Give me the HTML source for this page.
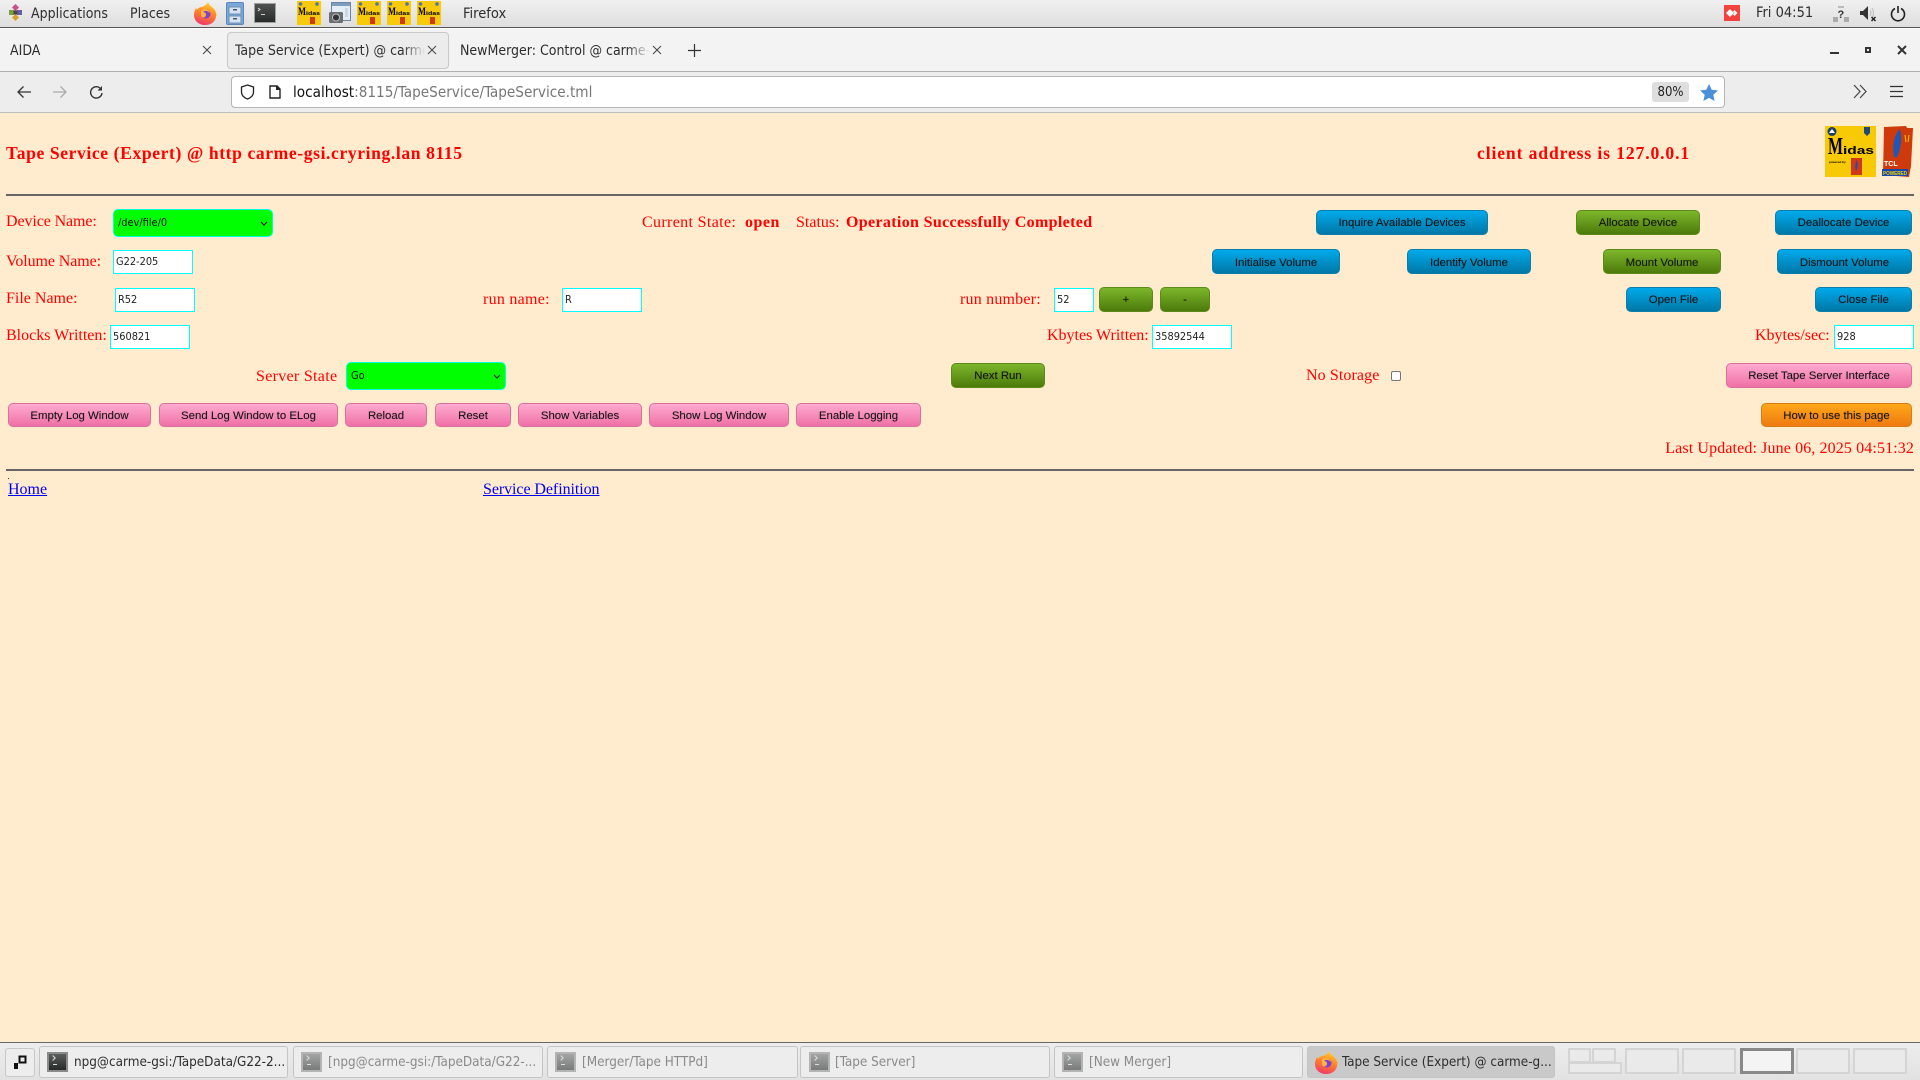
<!DOCTYPE html>
<html><head><meta charset="utf-8"><title>Tape Service (Expert)</title>
<style>
html,body{margin:0;padding:0;width:1920px;height:1080px;overflow:hidden;background:#ffebcd}
*{box-sizing:border-box}
.a{position:absolute;white-space:nowrap}
#top{position:absolute;left:0;top:0;width:1920px;height:28px;background:linear-gradient(#f0f0f0,#dedede);border-bottom:1px solid #555}
#tabs{position:absolute;left:0;top:28px;width:1920px;height:44px;background:#f3f3f3;border-bottom:1px solid #b0b0b0;border-top:1px solid #fff}
#nav{position:absolute;left:0;top:72px;width:1920px;height:41px;background:#ededed;border-bottom:1px solid #bdbdbd}
#task{position:absolute;left:0;top:1042px;width:1920px;height:38px;background:linear-gradient(#ededed,#e2e2e2);border-top:1px solid #666}
.ui{font-family:"DejaVu Sans Condensed","DejaVu Sans",sans-serif;font-stretch:condensed;font-size:14px;line-height:20px;height:20px;color:#2e2e2e}
.s{font-family:"Liberation Serif",serif;font-size:16px;line-height:20px;height:20px;color:#f00}
.b{font-weight:bold}
.t{font-size:17.6px;font-weight:bold}
hr{position:absolute;margin:0;border:0;height:2px;background:#666;left:6px;width:1908px}
button{position:absolute;padding:0;font-family:"Liberation Sans",sans-serif;font-size:11.4px;color:#111;border-radius:5px;text-shadow:0 0 1px rgba(0,0,0,.25)}
.p1{padding-top:2px}
.bl{background:linear-gradient(#00aaeb,#0077a6);border:1px solid #0a7fae}
.gr{background:linear-gradient(#7cb72b,#4d7a0b);border:1px solid #5c8a18}
.pk{background:linear-gradient(#ffabcf,#ef70a6);border:1px solid #d9719f}
.or{background:linear-gradient(#ffa819,#ee7a12);border:1px solid #d87c14}
input[type=text]{position:absolute;width:80px;height:24px;padding:0 2px 2px;margin:0;border:1.5px solid #0ff;border-radius:0;background:#fff;font-family:"DejaVu Sans Condensed","DejaVu Sans",sans-serif;font-stretch:condensed;font-size:10.9px;color:#222;outline:0}
.sel{position:absolute;width:160px;height:28px;background:#0f0;border:1px solid #0fd;border-radius:5px;font-family:"DejaVu Sans Condensed","DejaVu Sans",sans-serif;font-stretch:condensed;font-size:10.9px;color:#111;line-height:26px;padding-left:4px}
.sel svg{position:absolute;right:4px;top:11px}
a{color:#00e;text-decoration:underline}
.tk{position:absolute;top:1046px;height:32px;border:1px solid #c4c4c4;border-radius:3px;background:#ededed;font-family:"DejaVu Sans Condensed","DejaVu Sans",sans-serif;font-stretch:condensed;font-size:13.4px;line-height:31px;color:#8a8a8a;padding-left:34px;white-space:nowrap;overflow:hidden}
.pg{position:absolute;top:1048px;height:26px;width:54px;border:2px solid #d4d4d4;background:#eaeaea}
.term{position:absolute;top:1052px;width:21px;height:20px;background:linear-gradient(#a2a5a3,#787b79);border:2px solid #b4b4b4}
.term:after{content:"";position:absolute;left:4px;top:10px;width:4px;height:1px;background:#ddd}
.term:before{content:"";position:absolute;left:2px;top:2px;width:3px;height:3px;border-top:1px solid #ddd;border-right:1px solid #ddd;transform:rotate(45deg)}
.mi{position:absolute;top:1px;width:24px;height:24px}
.bx{position:absolute;border:2px solid #d4d4d4;background:#eaeaea}
</style></head><body>

<div id="top"></div>
<div id="tabs"></div>
<div id="nav"></div>

<!-- panel -->
<svg class="a" style="left:8px;top:4px" width="15" height="18" viewBox="0 0 15 18"><rect x="5" y="1" width="5" height="5" fill="#c84f8c" transform="rotate(45 7.5 3.5)"/><rect x="1" y="6" width="5" height="5" fill="#7a9e3a"/><rect x="9" y="6" width="5" height="5" fill="#6a5ba8"/><rect x="5" y="11" width="5" height="5" fill="#d9a02e" transform="rotate(45 7.5 13.5)"/><rect x="5.500" y="6.500" width="4" height="4" fill="#444"/></svg>
<div class="a ui" style="left:31px;top:4px">Applications</div>
<div class="a ui" style="left:130px;top:4px">Places</div>
<svg class="a" style="left:193px;top:1px" width="24" height="25" viewBox="0 0 24 25"><defs><linearGradient id="ff" x1=".7" y1="0" x2=".4" y2="1"><stop offset="0" stop-color="#ffd52e"/><stop offset=".45" stop-color="#ff8a24"/><stop offset="1" stop-color="#f0396a"/></linearGradient></defs><path d="M15 1c1 3 3 4 5 6 3 3 4 6 3 9-1 5-5 8-11 8S1 20 1 14c0-3 1-5 2-7l1 2c1-2 3-3 5-3 2-1 5-2 6-5z" fill="url(#ff)"/><circle cx="13" cy="13" r="4.500" fill="#7a44d0"/><path d="M8 10c2-3 8-2 9 2-2-2-5-3-7-1 3 0 4 3 2 5-2 1-4 0-4-2 0-1 0-3 0-4z" fill="#ffb347"/></svg>
<svg class="a" style="left:226px;top:2px" width="18" height="23" viewBox="0 0 18 23"><rect x=".5" y=".5" width="17" height="22" rx="1.500" fill="#7aa8da" stroke="#5a86b8"/><rect x="3" y="5" width="12" height="7" fill="#d5e3f2" stroke="#6d8db3"/><rect x="3" y="14" width="12" height="7" fill="#d5e3f2" stroke="#6d8db3"/><rect x="7" y="7" width="4" height="1.500" fill="#456"/><rect x="7" y="16" width="4" height="1.500" fill="#456"/></svg>
<svg class="a" style="left:254px;top:3px" width="22" height="20" viewBox="0 0 22 20"><defs><linearGradient id="tg" x1="0" y1="0" x2="0" y2="1"><stop offset="0" stop-color="#4f5452"/><stop offset="1" stop-color="#262a28"/></linearGradient></defs><rect x=".5" y=".5" width="21" height="19" fill="url(#tg)" stroke="#a0a0a0"/><path d="M4 5l2 1.500L4 8" stroke="#ddd" fill="none"/><rect x="7" y="11" width="4" height="1" fill="#ccc"/></svg>

<svg class="mi" style="left:297px" viewBox="0 0 24 24"><rect width="24" height="24" fill="#f8ca0c"/><circle cx="3.500" cy="3" r="1.800" fill="#56749a"/><circle cx="20" cy="3" r="1.800" fill="#56749a"/><text x="1" y="14" font-family="Liberation Serif" font-weight="bold" font-size="12" textLength="8" lengthAdjust="spacingAndGlyphs">M</text><text x="9" y="14" font-family="Liberation Sans" font-weight="bold" font-size="5.500" textLength="14" lengthAdjust="spacingAndGlyphs">idas</text><rect x="13" y="16" width="5" height="7" fill="#d0381a"/></svg>
<svg class="a" style="left:329px;top:2px" width="22" height="23" viewBox="0 0 22 23"><rect x="2.500" y=".5" width="19" height="18" fill="#e4ecf4" stroke="#6a85a5"/><rect x="3" y="1" width="18" height="3" fill="#7f9dbd"/><rect x="16" y="6" width="3" height="9" fill="#c8d8e8"/><rect x="0" y="10" width="14" height="11" rx="1.500" fill="#6a6e71"/><circle cx="7" cy="15.500" r="3.500" fill="#333" stroke="#bbb"/></svg>
<svg class="mi" style="left:357px" viewBox="0 0 24 24"><rect width="24" height="24" fill="#f8ca0c"/><circle cx="3.500" cy="3" r="1.800" fill="#56749a"/><circle cx="20" cy="3" r="1.800" fill="#56749a"/><text x="1" y="14" font-family="Liberation Serif" font-weight="bold" font-size="12" textLength="8" lengthAdjust="spacingAndGlyphs">M</text><text x="9" y="14" font-family="Liberation Sans" font-weight="bold" font-size="5.500" textLength="14" lengthAdjust="spacingAndGlyphs">idas</text><rect x="13" y="16" width="5" height="7" fill="#d0381a"/></svg>
<svg class="mi" style="left:387px" viewBox="0 0 24 24"><rect width="24" height="24" fill="#f8ca0c"/><circle cx="3.500" cy="3" r="1.800" fill="#56749a"/><circle cx="20" cy="3" r="1.800" fill="#56749a"/><text x="1" y="14" font-family="Liberation Serif" font-weight="bold" font-size="12" textLength="8" lengthAdjust="spacingAndGlyphs">M</text><text x="9" y="14" font-family="Liberation Sans" font-weight="bold" font-size="5.500" textLength="14" lengthAdjust="spacingAndGlyphs">idas</text><rect x="13" y="16" width="5" height="7" fill="#d0381a"/></svg>
<svg class="mi" style="left:417px" viewBox="0 0 24 24"><rect width="24" height="24" fill="#f8ca0c"/><circle cx="3.500" cy="3" r="1.800" fill="#56749a"/><circle cx="20" cy="3" r="1.800" fill="#56749a"/><text x="1" y="14" font-family="Liberation Serif" font-weight="bold" font-size="12" textLength="8" lengthAdjust="spacingAndGlyphs">M</text><text x="9" y="14" font-family="Liberation Sans" font-weight="bold" font-size="5.500" textLength="14" lengthAdjust="spacingAndGlyphs">idas</text><rect x="13" y="16" width="5" height="7" fill="#d0381a"/></svg>
<div class="a ui" style="left:463px;top:4px;font-size:14.600px">Firefox</div>

<svg class="a" style="left:1724px;top:5px" width="16" height="16" viewBox="0 0 16 16"><rect width="16" height="16" fill="#f4433c"/><path d="M6 4l4 4-4 4-4-4z M10.500 5l3 3-3 3-1.500-1.500L10.500 8 9 6.500z" fill="#fff"/></svg>
<div class="a ui" style="left:1756px;top:3px;font-size:14.500px">Fri 04:51</div>
<svg class="a" style="left:1833px;top:5px" width="16" height="17" viewBox="0 0 16 17"><rect x="0" y="12" width="5" height="5" fill="#aaa"/><rect x="11" y="12" width="5" height="5" fill="#aaa"/><rect x="5" y="1" width="6" height="2" fill="#bbb"/><text x="4.500" y="13" font-family="Liberation Sans" font-weight="bold" font-size="11" fill="#333">?</text></svg>
<svg class="a" style="left:1860px;top:5px" width="17" height="17" viewBox="0 0 17 17"><path d="M0 6h3l5-5v14l-5-5H0z" fill="#333"/><path d="M10 5q2 3 0 6M12 3q3 5 0 10" stroke="#bbb" fill="none"/><path d="M11.500 12l4 4m0-4l-4 4" stroke="#222" stroke-width="1.500"/></svg>
<svg class="a" style="left:1890px;top:5px" width="16" height="17" viewBox="0 0 16 17"><path d="M5 3.500a6.500 6.500 0 1 0 6 0" fill="none" stroke="#222" stroke-width="1.600"/><path d="M8 1v7" stroke="#222" stroke-width="1.600"/></svg>

<!-- tabs -->
<div class="a ui" style="left:10px;top:41px">AIDA</div>
<svg class="a" style="left:202px;top:45px" width="10" height="10"><path d="M1 1l8 8M9 1l-8 8" stroke="#444"/></svg>
<div class="a" style="left:227px;top:32px;width:222px;height:37px;background:#ececec;border:1px solid #c8c8c8;border-radius:4px"></div>
<div class="a ui" style="left:235px;top:41px;width:190px;overflow:hidden;-webkit-mask-image:linear-gradient(90deg,#000 88%,transparent)">Tape Service (Expert) @ carme-gsi</div>
<svg class="a" style="left:427px;top:45px" width="10" height="10"><path d="M1 1l8 8M9 1l-8 8" stroke="#444"/></svg>
<div class="a ui" style="left:460px;top:41px;width:190px;overflow:hidden;-webkit-mask-image:linear-gradient(90deg,#000 88%,transparent)">NewMerger: Control @ carme-gsi</div>
<svg class="a" style="left:652px;top:45px" width="10" height="10"><path d="M1 1l8 8M9 1l-8 8" stroke="#444"/></svg>
<svg class="a" style="left:688px;top:44px" width="13" height="13"><path d="M6.500 0v13M0 6.500h13" stroke="#333" stroke-width="1.200"/></svg>
<div class="a" style="left:1830px;top:52px;width:9px;height:2px;background:#333"></div>
<div class="a" style="left:1865px;top:47px;width:6px;height:6px;border:2px solid #333"></div>
<svg class="a" style="left:1897px;top:45px" width="10" height="10"><path d="M1 1l8 8M9 1l-8 8" stroke="#333" stroke-width="2"/></svg>

<!-- nav -->
<svg class="a" style="left:16px;top:85px" width="16" height="14"><path d="M15 7H2M7.500 1.500L2 7l5.500 5.500" fill="none" stroke="#333" stroke-width="1.300"/></svg>
<svg class="a" style="left:52px;top:85px" width="16" height="14"><path d="M1 7h13M8.500 1.500L14 7l-5.500 5.500" fill="none" stroke="#aaa" stroke-width="1.300"/></svg>
<svg class="a" style="left:89px;top:85px" width="15" height="15"><path d="M13 8a5.700 5.700 0 1 1-2-5" fill="none" stroke="#333" stroke-width="1.400"/><path d="M13 1v4.500H8.500z" fill="#333"/></svg>
<div class="a" style="left:231px;top:76px;width:1494px;height:32px;background:#fff;border:1px solid #b5b5b5;border-radius:4px"></div>
<svg class="a" style="left:240px;top:84px" width="15" height="16"><path d="M7.500 1l6 2v5c0 3.500-3 6-6 7-3-1-6-3.500-6-7V3z" fill="none" stroke="#222" stroke-width="1.300"/></svg>
<svg class="a" style="left:269px;top:85px" width="12" height="14"><path d="M1 1h7l3 3v9H1z" fill="none" stroke="#222" stroke-width="1.400"/><path d="M7.500 1v3.500H11" fill="#222" stroke="#222"/></svg>
<div class="a ui" style="left:293px;top:82px;font-size:15.150px;color:#777"><span style="color:#111">localhost</span>:8115/TapeService/TapeService.tml</div>
<div class="a ui" style="left:1652px;top:82px;width:37px;height:20px;background:#dedede;border-radius:3px;text-align:center;font-size:13px;color:#222;line-height:21px">80%</div>
<svg class="a" style="left:1700px;top:84px" width="18" height="17" viewBox="0 0 18 17"><path d="M9 0l2.700 5.800 6.300.7-4.700 4.200 1.300 6.300L9 13.900 3.400 17l1.300-6.300L0 6.500l6.300-.7z" fill="#4a90d9"/></svg>
<svg class="a" style="left:1853px;top:84px" width="15" height="15"><path d="M1 1l6 6.500L1 14M7 1l6 6.500L7 14" fill="none" stroke="#444" stroke-width="1.200"/></svg>
<svg class="a" style="left:1890px;top:85px" width="13" height="13"><path d="M0 1.500h13M0 6.500h13M0 11.500h13" stroke="#333" stroke-width="1.300"/></svg>

<!-- page -->
<div class="a s t" style="left:6px;top:143px;letter-spacing:.59px">Tape Service (Expert) @ http carme-gsi.cryring.lan 8115</div>
<div class="a s t" style="left:1477px;top:143px;letter-spacing:.88px">client address is 127.0.0.1</div>

<svg class="a" style="left:1825px;top:126px" width="51" height="51" viewBox="0 0 51 51"><rect width="51" height="51" fill="#f8c905"/><circle cx="7" cy="5.500" r="4.500" fill="#1c3f6e"/><path d="M4 7l3-4 3 4z" fill="#fff"/><path d="M39 1h6v6l-3 3-3-3z" fill="#1c4a7a"/><text x="3" y="28" font-family="Liberation Serif" font-weight="bold" font-size="24" textLength="15" lengthAdjust="spacingAndGlyphs">M</text><text x="18" y="28" font-family="Liberation Sans" font-weight="bold" font-size="11" textLength="31" lengthAdjust="spacingAndGlyphs">idas</text><text x="4" y="37" font-family="Liberation Sans" font-weight="bold" font-size="3">powered by</text><rect x="26" y="32" width="11" height="17" fill="#d0381a"/><path d="M32 34c-2 3-2 7-1 11 2-3 2-8 1-11z" fill="#1d50b0"/></svg>
<svg class="a" style="left:1881px;top:126px" width="33" height="51" viewBox="0 0 33 51"><path d="M3 1l22-1 1 2 6 0-2 38-2 11-26-2z" fill="#cf3a0a"/><path d="M19 3c-6 6-8 16-6 28 2 1 3 0 4-2 3-8 4-18 2-26z" fill="#1d57b8"/><path d="M24 9l1 7M28 9l-1 7" stroke="#f6c400" fill="none"/><rect x="1" y="43" width="26" height="7" fill="#1747a8"/><text x="3" y="40" font-family="Liberation Sans" font-weight="bold" font-size="7" fill="#fff">TCL</text><text x="2" y="49" font-family="Liberation Sans" font-weight="bold" font-size="5.500" fill="#f6d400" textLength="24" lengthAdjust="spacingAndGlyphs">POWERED</text></svg>

<hr style="top:194px">

<div class="a s" style="left:6px;top:212px;letter-spacing:-.1px">Device Name:</div>
<div class="sel" style="left:113px;top:209px">/dev/file/0<svg width="8" height="6"><path d="M1 1l3 3 3-3" fill="none" stroke="#222" stroke-width="1.200"/></svg></div>
<div class="a s" style="left:642px;top:213px;letter-spacing:.35px">Current State:</div>
<div class="a s b" style="left:745px;top:213px;letter-spacing:.5px">open</div>
<div class="a s" style="left:796px;top:213px">Status:</div>
<div class="a s b" style="left:846px;top:213px;letter-spacing:.34px">Operation Successfully Completed</div>
<button class="bl" style="left:1316px;top:210px;width:172px;height:25px">Inquire Available Devices</button>
<button class="gr" style="left:1576px;top:210px;width:124px;height:25px">Allocate Device</button>
<button class="bl" style="left:1775px;top:210px;width:137px;height:25px">Deallocate Device</button>

<div class="a s" style="left:6px;top:252px;letter-spacing:-.1px">Volume Name:</div>
<input type="text" value="G22-205" style="left:113px;top:250px">
<button class="bl p1" style="left:1212px;top:249px;width:128px;height:25px">Initialise Volume</button>
<button class="bl p1" style="left:1407px;top:249px;width:124px;height:25px">Identify Volume</button>
<button class="gr p1" style="left:1603px;top:249px;width:118px;height:25px">Mount Volume</button>
<button class="bl p1" style="left:1777px;top:249px;width:135px;height:25px">Dismount Volume</button>

<div class="a s" style="left:6px;top:289px">File Name:</div>
<input type="text" value="R52" style="left:115px;top:288px">
<div class="a s" style="left:483px;top:290px;letter-spacing:.27px">run name:</div>
<input type="text" value="R" style="left:562px;top:288px">
<div class="a s" style="left:960px;top:290px;letter-spacing:.2px">run number:</div>
<input type="text" value="52" style="left:1054px;top:288px;width:40px">
<button class="gr" style="left:1099px;top:287px;width:54px;height:25px">+</button>
<button class="gr" style="left:1160px;top:287px;width:50px;height:25px">-</button>
<button class="bl" style="left:1626px;top:287px;width:95px;height:25px">Open File</button>
<button class="bl" style="left:1815px;top:287px;width:97px;height:25px">Close File</button>

<div class="a s" style="left:6px;top:326px">Blocks Written:</div>
<input type="text" value="560821" style="left:110px;top:325px">
<div class="a s" style="left:1047px;top:326px">Kbytes Written:</div>
<input type="text" value="35892544" style="left:1152px;top:325px">
<div class="a s" style="left:1755px;top:326px">Kbytes/sec:</div>
<input type="text" value="928" style="left:1834px;top:325px">

<div class="a s" style="left:256px;top:367px;letter-spacing:.3px">Server State</div>
<div class="sel" style="left:346px;top:362px">Go<svg width="8" height="6"><path d="M1 1l3 3 3-3" fill="none" stroke="#222" stroke-width="1.200"/></svg></div>
<button class="gr" style="left:951px;top:363px;width:94px;height:25px">Next Run</button>
<div class="a s" style="left:1306px;top:366px;letter-spacing:.1px">No Storage</div>
<div class="a" style="left:1391px;top:371px;width:10px;height:10px;background:#fff;border:1px solid #777;border-radius:2px"></div>
<button class="pk" style="left:1726px;top:363px;width:186px;height:25px">Reset Tape Server Interface</button>

<button class="pk p1" style="left:8px;top:403px;width:143px;height:24px">Empty Log Window</button>
<button class="pk p1" style="left:159px;top:403px;width:179px;height:24px">Send Log Window to ELog</button>
<button class="pk p1" style="left:345px;top:403px;width:82px;height:24px">Reload</button>
<button class="pk p1" style="left:435px;top:403px;width:76px;height:24px">Reset</button>
<button class="pk p1" style="left:518px;top:403px;width:124px;height:24px">Show Variables</button>
<button class="pk p1" style="left:649px;top:403px;width:140px;height:24px">Show Log Window</button>
<button class="pk p1" style="left:796px;top:403px;width:125px;height:24px">Enable Logging</button>
<button class="or p1" style="left:1761px;top:403px;width:151px;height:24px">How to use this page</button>

<div class="a s" style="right:6px;top:439px;letter-spacing:.12px">Last Updated: June 06, 2025 04:51:32</div>
<hr style="top:469px">
<div class="a" style="left:8px;top:478px;width:1px;height:1px;background:#333"></div>
<div class="a s" style="left:8px;top:480px"><a>Home</a></div>
<div class="a s" style="left:483px;top:480px;letter-spacing:-.07px"><a>Service Definition</a></div>

<!-- taskbar -->
<div id="task"></div>
<div class="a" style="left:5px;top:1048px;width:30px;height:29px;border:1px solid #c8c8c8;border-radius:3px;background:#ededed"></div>
<svg class="a" style="left:13px;top:1055px" width="15" height="15"><rect x="6.500" y="1.500" width="6" height="6" fill="none" stroke="#111" stroke-width="2"/><path d="M1 8h4v6H1z" fill="#111"/></svg>

<div class="tk" style="left:39px;width:249px;color:#2e2e2e;padding-left:34px">npg@carme-gsi:/TapeData/G22-2...</div>
<div class="term" style="left:47px;background:linear-gradient(#5a5f5d,#252927);border-color:#8a8a8a"></div>
<div class="tk" style="left:293px;width:250px;padding-left:34px">[npg@carme-gsi:/TapeData/G22-...</div>
<div class="term" style="left:301px"></div>
<div class="tk" style="left:547px;width:251px;padding-left:34px">[Merger/Tape HTTPd]</div>
<div class="term" style="left:555px"></div>
<div class="tk" style="left:800px;width:250px;padding-left:34px">[Tape Server]</div>
<div class="term" style="left:809px"></div>
<div class="tk" style="left:1054px;width:249px;padding-left:34px">[New Merger]</div>
<div class="term" style="left:1062px"></div>
<div class="tk" style="left:1307px;width:248px;background:#c9c9c9;color:#2e2e2e;padding-left:34px">Tape Service (Expert) @ carme-g...</div>
<svg class="a" style="left:1314px;top:1050px" width="24" height="25" viewBox="0 0 24 25"><path d="M15 1c1 3 3 4 5 6 3 3 4 6 3 9-1 5-5 8-11 8S1 20 1 14c0-3 1-5 2-7l1 2c1-2 3-3 5-3 2-1 5-2 6-5z" fill="url(#ff)"/><circle cx="13" cy="13" r="4.500" fill="#7a44d0"/><path d="M8 10c2-3 8-2 9 2-2-2-5-3-7-1 3 0 4 3 2 5-2 1-4 0-4-2 0-1 0-3 0-4z" fill="#ffb347"/></svg>

<div class="bx" style="left:1568px;top:1048px;width:23px;height:15px"></div>
<div class="bx" style="left:1592px;top:1048px;width:24px;height:15px"></div>
<div class="bx" style="left:1568px;top:1062px;width:54px;height:12px"></div>
<div class="pg" style="left:1625px"></div>
<div class="pg" style="left:1682px"></div>
<div class="pg" style="left:1740px;background:#f4f4f4;border:3px solid #888"></div>
<div class="pg" style="left:1796px"></div>
<div class="pg" style="left:1853px"></div>
</body></html>
